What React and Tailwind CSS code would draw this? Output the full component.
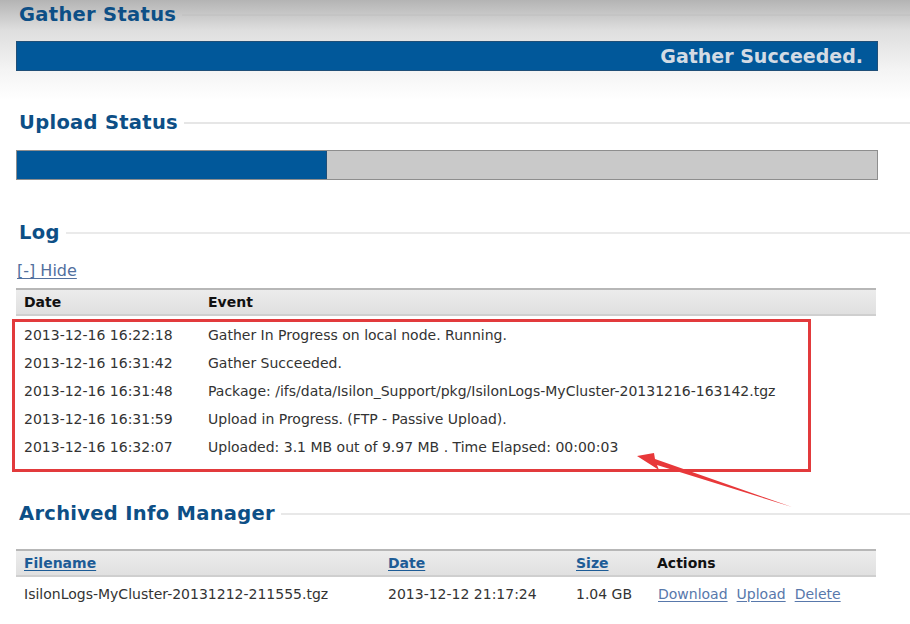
import React from "react";

const font = { fontFamily: '"DejaVu Sans", Verdana, sans-serif' };

function Heading({ children, line = "bg-[#dcdcdc]" }) {
  return (
    <div className="flex items-center h-[28px]">
      <div className="pl-[19px] pr-[6px] text-[19.5px] font-bold text-[#0d4f86] leading-none whitespace-nowrap tracking-[0.3px]">
        {children}
      </div>
      <div className={`flex-1 h-[2px] ${line}`} />
    </div>
  );
}

const logRows = [
  ["2013-12-16 16:22:18", "Gather In Progress on local node. Running."],
  ["2013-12-16 16:31:42", "Gather Succeeded."],
  ["2013-12-16 16:31:48", "Package: /ifs/data/Isilon_Support/pkg/IsilonLogs-MyCluster-20131216-163142.tgz"],
  ["2013-12-16 16:31:59", "Upload in Progress. (FTP - Passive Upload)."],
  ["2013-12-16 16:32:07", "Uploaded: 3.1 MB out of 9.97 MB . Time Elapsed: 00:00:03"],
];

export default function App() {
  return (
    <div
      className="relative w-[910px] h-[624px] overflow-hidden bg-white bg-[image:linear-gradient(to_bottom,#b4b4b4_0px,#dedede_30px,#f4f4f4_70px,#ffffff_100px)]"
      style={font}
    >
      <div className="pt-[1px]">
        <Heading line="bg-[#c4c4c4]">Gather Status</Heading>
        <div className="mt-[12px] ml-[16px] w-[862px] h-[30px] bg-[#01589a] border border-[#1f4f78] flex items-center justify-end pr-[14px]">
          <span className="text-[19px] font-bold text-[#d3dbe4] leading-none">Gather Succeeded.</span>
        </div>

        <div className="mt-[38px]">
          <Heading line="bg-[#e6e6e6]">Upload Status</Heading>
        </div>
        <div className="mt-[13px] ml-[16px] w-[862px] h-[30px] bg-[#c9c9c9] border border-[#8e8e8e] flex">
          <div className="w-[310px] h-full bg-[#01589a] border-r border-[#1f4f78]" />
        </div>

        <div className="mt-[39px]">
          <Heading line="bg-[#eaeaea]">Log</Heading>
        </div>
        <div className="mt-[14px] ml-[17px] h-[20px] flex items-center">
          <span className="text-[16px] text-[#52709e] underline underline-offset-2 leading-none">[-] Hide</span>
        </div>

        <div className="mt-[7px] ml-[16px] w-[860px]">
          <div className="h-[28px] flex items-center border-t-2 border-[#b7b7b7] border-b-2 border-b-[#cfcfcf] bg-[image:linear-gradient(to_bottom,#ececec,#e0e0e0)] text-[14px] font-bold text-[#111]">
            <div className="w-[184px] pl-[8px]">Date</div>
            <div className="pl-[8px]">Event</div>
          </div>
          <div className="pt-[5px]">
            {logRows.map(([d, e]) => (
              <div key={d} className="h-[28px] flex items-center text-[14px] text-[#333]">
                <div className="w-[184px] pl-[8px] whitespace-nowrap">{d}</div>
                <div className="pl-[8px] whitespace-nowrap">{e}</div>
              </div>
            ))}
          </div>
        </div>

        <div className="mt-[39px]">
          <Heading line="bg-[#e8e8e8]">Archived Info Manager</Heading>
        </div>

        <div className="mt-[21px] ml-[16px] w-[860px]">
          <div className="h-[28px] flex items-center border-t-2 border-[#b7b7b7] border-b-2 border-b-[#cfcfcf] bg-[image:linear-gradient(to_bottom,#ececec,#e0e0e0)] text-[14px] font-bold">
            <div className="w-[364px] pl-[8px]"><span className="text-[#1d5c96] underline underline-offset-2">Filename</span></div>
            <div className="w-[188px] pl-[8px]"><span className="text-[#1d5c96] underline underline-offset-2">Date</span></div>
            <div className="w-[81px] pl-[8px]"><span className="text-[#1d5c96] underline underline-offset-2">Size</span></div>
            <div className="pl-[8px] text-[#111]">Actions</div>
          </div>
          <div className="h-[34px] flex items-center text-[14px] text-[#333]">
            <div className="w-[364px] pl-[8px] whitespace-nowrap">IsilonLogs-MyCluster-20131212-211555.tgz</div>
            <div className="w-[188px] pl-[8px] whitespace-nowrap">2013-12-12 21:17:24</div>
            <div className="w-[81px] pl-[8px] whitespace-nowrap">1.04 GB</div>
            <div className="pl-[9px] flex gap-[9px] text-[#5878ab]">
              <span className="underline underline-offset-2">Download</span>
              <span className="underline underline-offset-2">Upload</span>
              <span className="underline underline-offset-2">Delete</span>
            </div>
          </div>
        </div>
      </div>

      {/* annotation box */}
      <div className="absolute left-[12px] top-[319px] w-[799px] h-[153px] border-[3px] border-[#e23a3c] pointer-events-none" />
      {/* annotation arrow */}
      <svg className="absolute left-0 top-0 pointer-events-none" width="910" height="624">
        <polygon
          points="637,456 654,453 655,459 792,507 657,465 659,470"
          fill="#e8383a"
        />
      </svg>
    </div>
  );
}
